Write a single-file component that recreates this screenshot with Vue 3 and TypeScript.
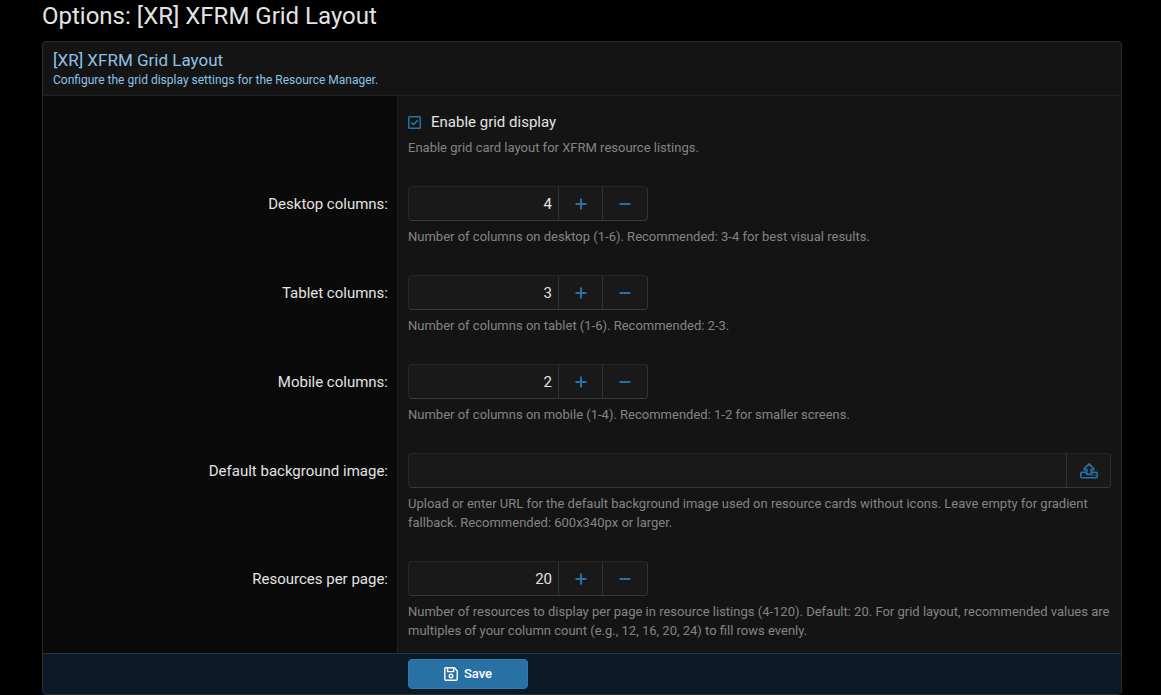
<script setup lang="ts">
import { ref } from 'vue'

interface NumberOption {
  kind: 'number'
  id: string
  label: string
  hint: string
  value: number
  min: number
  max: number
}

interface UploadOption {
  kind: 'upload'
  id: string
  label: string
  hint: string
  value: string
}

const enabled = ref(true)

const options = ref<(NumberOption | UploadOption)[]>([
  {
    kind: 'number',
    id: 'desktop-columns',
    label: 'Desktop columns:',
    hint: 'Number of columns on desktop (1-6). Recommended: 3-4 for best visual results.',
    value: 4,
    min: 1,
    max: 6,
  },
  {
    kind: 'number',
    id: 'tablet-columns',
    label: 'Tablet columns:',
    hint: 'Number of columns on tablet (1-6). Recommended: 2-3.',
    value: 3,
    min: 1,
    max: 6,
  },
  {
    kind: 'number',
    id: 'mobile-columns',
    label: 'Mobile columns:',
    hint: 'Number of columns on mobile (1-4). Recommended: 1-2 for smaller screens.',
    value: 2,
    min: 1,
    max: 4,
  },
  {
    kind: 'upload',
    id: 'background-image',
    label: 'Default background image:',
    hint: 'Upload or enter URL for the default background image used on resource cards without icons. Leave empty for gradient fallback. Recommended: 600x340px or larger.',
    value: '',
  },
  {
    kind: 'number',
    id: 'resources-per-page',
    label: 'Resources per page:',
    hint: 'Number of resources to display per page in resource listings (4-120). Default: 20. For grid layout, recommended values are multiples of your column count (e.g., 12, 16, 20, 24) to fill rows evenly.',
    value: 20,
    min: 4,
    max: 120,
  },
])

function step(option: NumberOption, amount: number): void {
  option.value = Math.min(option.max, Math.max(option.min, option.value + amount))
}
</script>

<template>
  <main class="page">
    <h1 class="page-title">Options: [XR] XFRM Grid Layout</h1>

    <form class="panel" @submit.prevent>
      <header class="panel-header">
        <h2 class="panel-title">[XR] XFRM Grid Layout</h2>
        <p class="panel-description">Configure the grid display settings for the Resource Manager.</p>
      </header>

      <div class="row">
        <div class="row-label"></div>
        <div class="row-control">
          <label class="check">
            <input v-model="enabled" class="check-input" type="checkbox" aria-describedby="enabled-hint" />
            <svg class="check-icon" viewBox="0 0 13 13" aria-hidden="true">
              <rect x="0.75" y="0.75" width="11.5" height="11.5" rx="0.8" />
              <path v-if="enabled" d="M3 6.4 5.4 8.6 10 4.1" />
            </svg>
            <span class="check-text">Enable grid display</span>
          </label>
          <p id="enabled-hint" class="hint">Enable grid card layout for XFRM resource listings.</p>
        </div>
      </div>

      <div v-for="option in options" :key="option.id" class="row">
        <div class="row-label">
          <label :for="option.id">{{ option.label }}</label>
        </div>
        <div class="row-control">
          <div v-if="option.kind === 'number'" class="group group-number">
            <input
              :id="option.id"
              v-model.number="option.value"
              class="field field-number"
              type="number"
              :min="option.min"
              :max="option.max"
            />
            <button class="group-button" type="button" aria-label="Increase" @click="step(option, 1)">
              <svg class="step-icon" viewBox="0 0 12 12" aria-hidden="true"><path d="M6 0.5V11.5M0.5 6H11.5" /></svg>
            </button>
            <button class="group-button" type="button" aria-label="Decrease" @click="step(option, -1)">
              <svg class="step-icon" viewBox="0 0 12 12" aria-hidden="true"><path d="M0.5 6H11.5" /></svg>
            </button>
          </div>
          <div v-else class="group">
            <input :id="option.id" v-model="option.value" class="field" type="text" />
            <button class="group-button" type="button" aria-label="Upload file">
              <svg class="upload-icon" viewBox="0 0 18 16" aria-hidden="true">
                <path d="M9 0.9 13.8 5.7V6.6H11.2V11.4H6.8V6.6H4.2V5.7Z" />
                <path d="M6.8 9.4H1.6Q0.8 9.4 0.8 10.2V13.8Q0.8 14.8 1.8 14.8H16.2Q17.2 14.8 17.2 13.8V10.2Q17.2 9.4 16.4 9.4H11.2" />
                <path d="M12.2 12.4H13.2M14.4 12.4H15.4" />
              </svg>
            </button>
          </div>
          <p class="hint">{{ option.hint }}</p>
        </div>
      </div>

      <footer class="submit">
        <button class="save" type="submit">
          <svg class="save-icon" viewBox="0 0 14 14" aria-hidden="true">
            <path d="M2 0.8H10.2L13.2 3.8V12Q13.2 13.2 12 13.2H2Q0.8 13.2 0.8 12V2Q0.8 0.8 2 0.8Z" />
            <path d="M3.6 1V4.6H9.6V1" />
            <circle cx="7" cy="9" r="1.8" />
          </svg>
          <span>Save</span>
        </button>
      </footer>
    </form>
  </main>
</template>

<style>
html,
body {
  background: #000;
}
</style>

<style scoped>
.page {
  box-sizing: border-box;
  padding: 0 39px 0 42px;
  font-family: "Segoe UI", Roboto, "Noto Sans", sans-serif;
  font-size: 15px;
  line-height: 20px;
  color: #e3e3e3;
}

.page-title {
  margin: 0;
  padding-bottom: 9px;
  font-size: 24px;
  line-height: 32px;
  font-weight: 400;
}

.panel {
  border: 1px solid #2c2c2c;
  border-radius: 4px;
  background: #141414;
  overflow: hidden;
}

.panel-header {
  padding: 6px 10px;
  border-bottom: 1px solid #202020;
  color: #8fc1e6;
}

.panel-title {
  margin: 0;
  font-size: 17px;
  line-height: 24px;
  font-weight: 400;
}

.panel-description {
  margin: 0;
  font-size: 12px;
  line-height: 17px;
}

.row {
  display: grid;
  grid-template-columns: minmax(120px, 355px) minmax(0, 1fr);
}

.row-label {
  padding: 17px 9px 12px;
  border-right: 1px solid #202020;
  background: #0a0a0a;
  line-height: 35px;
  text-align: right;
}

.row-control {
  padding: 16px 10px 13px;
}

.check {
  display: flex;
  align-items: center;
  gap: 10px;
  width: fit-content;
}

.check-input {
  position: absolute;
  width: 13px;
  height: 13px;
  margin: 0;
  opacity: 0;
}

.check-icon {
  width: 13px;
  height: 13px;
  fill: none;
  stroke: #2871a5;
  stroke-width: 1.5;
}

.check-input:focus-visible + .check-icon {
  outline: 1px solid #8fc1e6;
}

.hint {
  margin: 6px 0 0;
  font-size: 13px;
  line-height: 19px;
  color: #848484;
}

.group {
  display: flex;
  box-sizing: border-box;
  height: 35px;
  border: 1px solid;
  border-color: #262626 #323232 #393939 #262626;
  border-radius: 4px;
  background: #191919;
  overflow: hidden;
}

.group-number {
  width: 240px;
  max-width: 100%;
}

.field {
  flex: 1;
  min-width: 0;
  padding: 0 6px;
  border: 0;
  outline: 0;
  background: transparent;
  color: #e3e3e3;
  font: inherit;
}

.field-number {
  appearance: textfield;
  text-align: right;
}

.field-number::-webkit-inner-spin-button {
  display: none;
}

.group-button {
  display: flex;
  flex: 0 0 44px;
  box-sizing: border-box;
  align-items: center;
  justify-content: center;
  padding: 0;
  border: 0;
  border-left: 1px solid #323232;
  background: transparent;
  color: #2871a5;
  cursor: pointer;
}

.group-number .group-button:last-child {
  flex-basis: 45px;
}

.step-icon {
  width: 12px;
  height: 12px;
  fill: none;
  stroke: currentColor;
  stroke-width: 2;
}

.upload-icon {
  width: 18px;
  height: 16px;
  fill: none;
  stroke: currentColor;
  stroke-width: 1.6;
}

.submit {
  display: grid;
  grid-template-columns: minmax(120px, 355px) minmax(0, 1fr);
  padding: 5px 0;
  border-top: 1px solid #323232;
  background: #0b1a26;
}

.save {
  display: flex;
  grid-column: 2;
  align-items: center;
  justify-content: center;
  gap: 6px;
  width: 120px;
  height: 30px;
  margin-left: 10px;
  padding: 0;
  border: 1px solid #2f7bb1;
  border-radius: 4px;
  background: #2871a5;
  color: #fff;
  font: inherit;
  font-size: 13px;
  font-weight: 500;
  cursor: pointer;
}

.save-icon {
  width: 14px;
  height: 14px;
  fill: none;
  stroke: currentColor;
  stroke-width: 1.4;
}
</style>
